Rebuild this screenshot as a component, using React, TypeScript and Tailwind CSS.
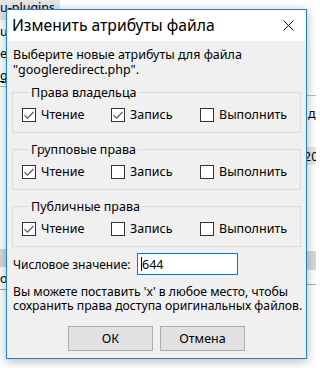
import React from "react";

const font = { fontFamily: '"Noto Sans", "Liberation Sans", sans-serif' };

function CheckBox({ checked, label }: { checked?: boolean; label: string }) {
  return (
    <div className="flex items-center gap-[5px]">
      <div className="flex h-[14px] w-[14px] items-center justify-center border border-[#333333] bg-white">
        {checked && (
          <svg width="12" height="12" viewBox="0 0 12 12" fill="none">
            <path d="M1.5 6.2 L4.5 9.2 L10.5 3" stroke="#555555" strokeWidth="1.1" />
          </svg>
        )}
      </div>
      <span className="text-[12.5px] leading-[15px] text-black">{label}</span>
    </div>
  );
}

function Group({ title, values }: { title: string; values: boolean[] }) {
  const labels = ["Чтение", "Запись", "Выполнить"];
  return (
    <fieldset className="mx-[5px] border border-[#dcdcdc] px-[9px] pb-[10px] pt-[7px]">
      <legend className="ml-[7px] px-[2px] text-[12.5px] leading-[15px] text-black">
        {title}
      </legend>
      <div className="grid grid-cols-[89px_89px_89px]">
        {labels.map((l, i) => (
          <CheckBox key={l} label={l} checked={values[i]} />
        ))}
      </div>
    </fieldset>
  );
}

function Background() {
  return (
    <div className="grid h-full grid-cols-[300px_16px] text-[12.5px] leading-[15px] text-black">
      {/* left panel */}
      <div className="flex flex-col">
        <div className="h-[20px]">
          <div className="-mt-[3px] w-[60px] bg-[#e5e5e5] pb-[5px] pt-[3px]">u-plugins</div>
        </div>
        <div className="flex h-[22px] items-center">ug</div>
        <div className="flex h-[22px] items-center">er</div>
        <div className="flex h-[22px] items-center">
          <span className="underline">g</span>
        </div>
        <div className="h-px bg-[#bcbcbc]" />
        <div className="h-[162px]" />
        <div className="h-[18px] bg-[#d9d9d9]" />
        <div className="flex h-[22px] items-center">о</div>
        <div className="h-px bg-[#a8a8a8]" />
      </div>
      {/* right panel */}
      <div className="flex flex-col">
        <div className="h-[95px]" />
        <div className="h-px bg-[#bcbcbc]" />
        <div className="flex h-[34px] items-center pl-[8px]">д</div>
        <div className="h-[17px]" />
        <div className="flex h-[18px] items-center overflow-hidden bg-[#e8e8e8] pl-[4px]">20</div>
        <div className="h-[86px]" />
        <div className="h-[19px] bg-[#d9d9d9]" />
        <div className="h-[14px]" />
        <div className="h-px bg-[#a8a8a8]" />
      </div>
    </div>
  );
}

export default function App() {
  return (
    <div className="relative h-[368px] w-[316px] overflow-hidden bg-white" style={font}>
      <Background />

      <div className="absolute left-[6px] top-[9px] flex h-[350px] w-[301px] flex-col border border-[#1883d7] bg-[#f0f0f0] shadow-[0_2px_10px_rgba(0,0,0,0.3)]">
        {/* title bar */}
        <div className="flex h-[31px] shrink-0 items-center justify-between bg-white pl-[5px] pr-[12px]">
          <span className="text-[15.7px] text-black">Изменить атрибуты файла</span>
          <svg width="11" height="11" viewBox="0 0 11 11">
            <path d="M0.5 0.5 L10.5 10.5 M10.5 0.5 L0.5 10.5" stroke="#111" strokeWidth="1" />
          </svg>
        </div>

        {/* body */}
        <div className="flex shrink-0 flex-col pt-[6px] text-[12.5px] leading-[15px] text-black">
          <p className="px-[6px]">
            Выберите новые атрибуты для файла
            <br />
            "googleredirect.php".
          </p>

          <div className="mt-[8px] flex flex-col gap-[9px]">
            <Group title="Права владельца" values={[true, true, false]} />
            <Group title="Групповые права" values={[true, false, false]} />
            <Group title="Публичные права" values={[true, false, false]} />
          </div>

          <div className="mt-[6px] flex items-center px-[6px]">
            <span className="w-[124px] text-[12px]">Числовое значение:</span>
            <div className="flex h-[22px] w-[101px] items-center border border-[#0078d7] bg-white pl-[3px]">
              <span className="h-[14px] w-px bg-black" />
              <span>644</span>
            </div>
          </div>

          <p className="mt-[10px] whitespace-nowrap px-[6px] text-[12.2px] leading-[14px]">
            Вы можете поставить 'x' в любое место, чтобы
            <br />
            сохранить права доступа оригинальных файлов.
          </p>

          <div className="mt-[13px] flex justify-center gap-[7px]">
            <button className="h-[25px] w-[85px] border border-[#adadad] bg-[#e1e1e1] text-[12.5px] text-black">
              ОК
            </button>
            <button className="h-[25px] w-[85px] border border-[#adadad] bg-[#e1e1e1] text-[12.5px] text-black">
              Отмена
            </button>
          </div>
        </div>
      </div>
    </div>
  );
}
